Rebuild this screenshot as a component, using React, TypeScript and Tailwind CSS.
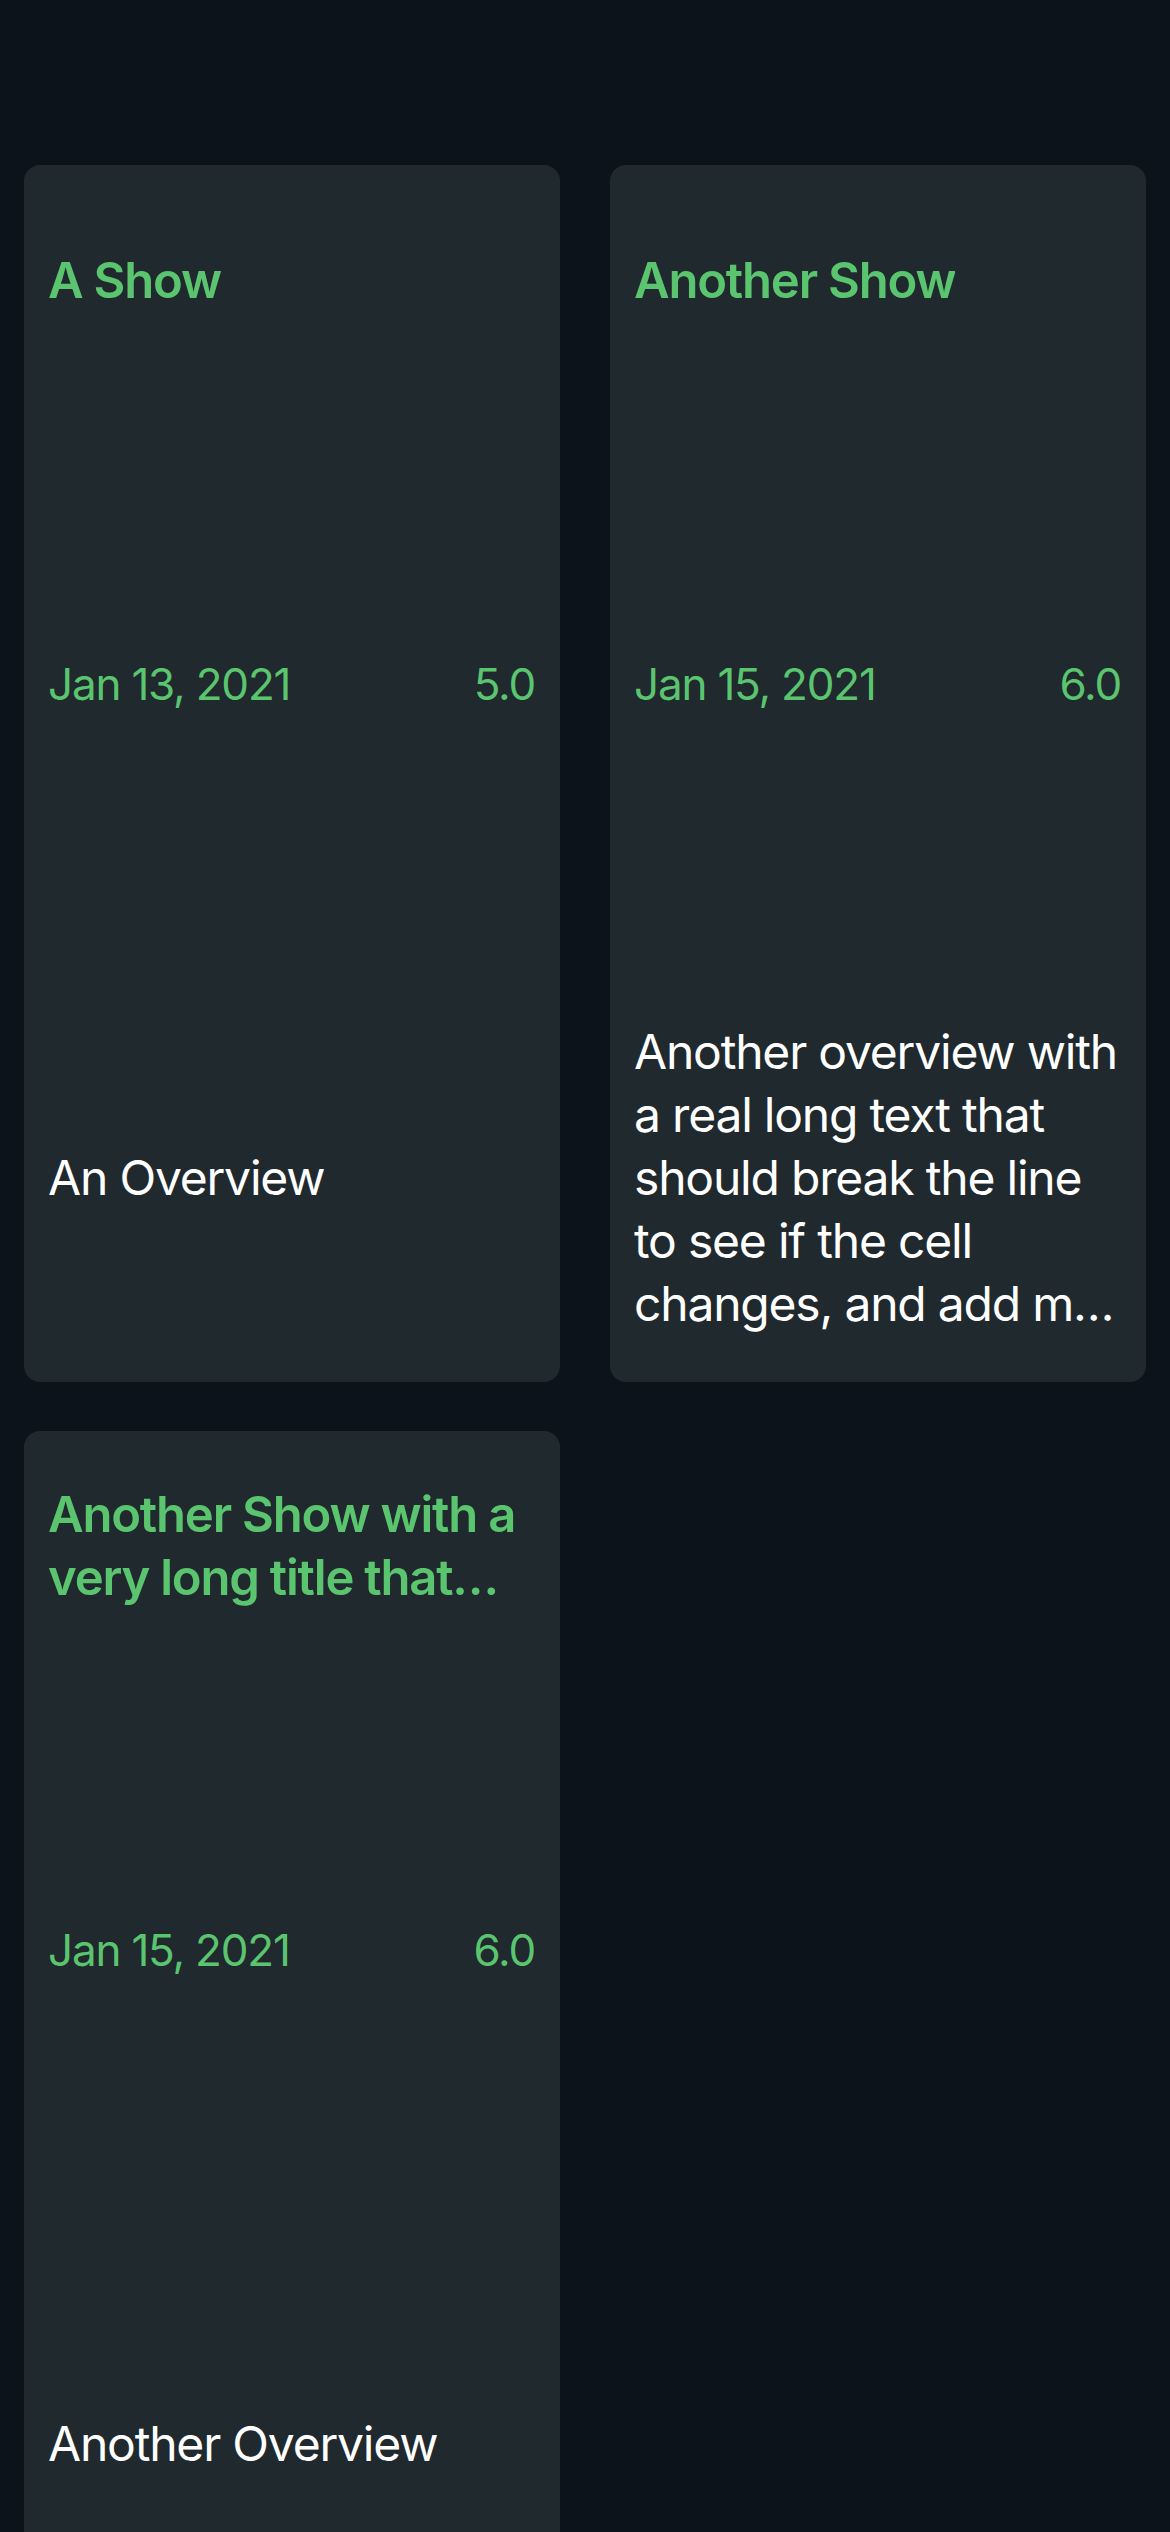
import React from "react";

type Show = { title: string; date: string; rating: string; overview: string };

const shows: Show[] = [
  { title: "A Show", date: "Jan 13, 2021", rating: "5.0", overview: "An Overview" },
  {
    title: "Another Show",
    date: "Jan 15, 2021",
    rating: "6.0",
    overview:
      "Another overview with a real long text that should break the line to see if the cell changes, and add m\u2026",
  },
  {
    title: "Another Show with a very long title that should be truncated at the end",
    date: "Jan 15, 2021",
    rating: "6.0",
    overview: "Another Overview",
  },
];

function Card({ show }: { show: Show }) {
  return (
    <div className="flex h-[1217px] flex-col rounded-[16px] bg-[#1f292e] pl-[24px] pr-[25px]">
      <div className="flex h-[230px] items-center">
        <div className="line-clamp-2 text-[49px] font-semibold leading-[63px] tracking-[-1.2px] text-[#5bc46f]">
          {show.title}
        </div>
      </div>
      <div className="flex h-[578px] items-center">
        <div className="flex w-full items-center justify-between text-[44px] leading-[54px] tracking-[-1.2px] text-[#5bc46f]">
          <span>{show.date}</span>
          <span>{show.rating}</span>
        </div>
      </div>
      <div className="flex h-[409px] items-center">
        <div className="line-clamp-5 text-[48px] leading-[63px] tracking-[-1.2px] text-white">{show.overview}</div>
      </div>
    </div>
  );
}

export default function App() {
  return (
    <div
      className="min-h-[2532px] bg-[#0c131a] px-[24px] pt-[165px]"
      style={{ fontFamily: "Inter, 'Noto Sans', sans-serif" }}
    >
      <div className="grid grid-cols-2 gap-x-[50px] gap-y-[49px]">
        {shows.map((s, i) => (
          <Card key={i} show={s} />
        ))}
      </div>
    </div>
  );
}
